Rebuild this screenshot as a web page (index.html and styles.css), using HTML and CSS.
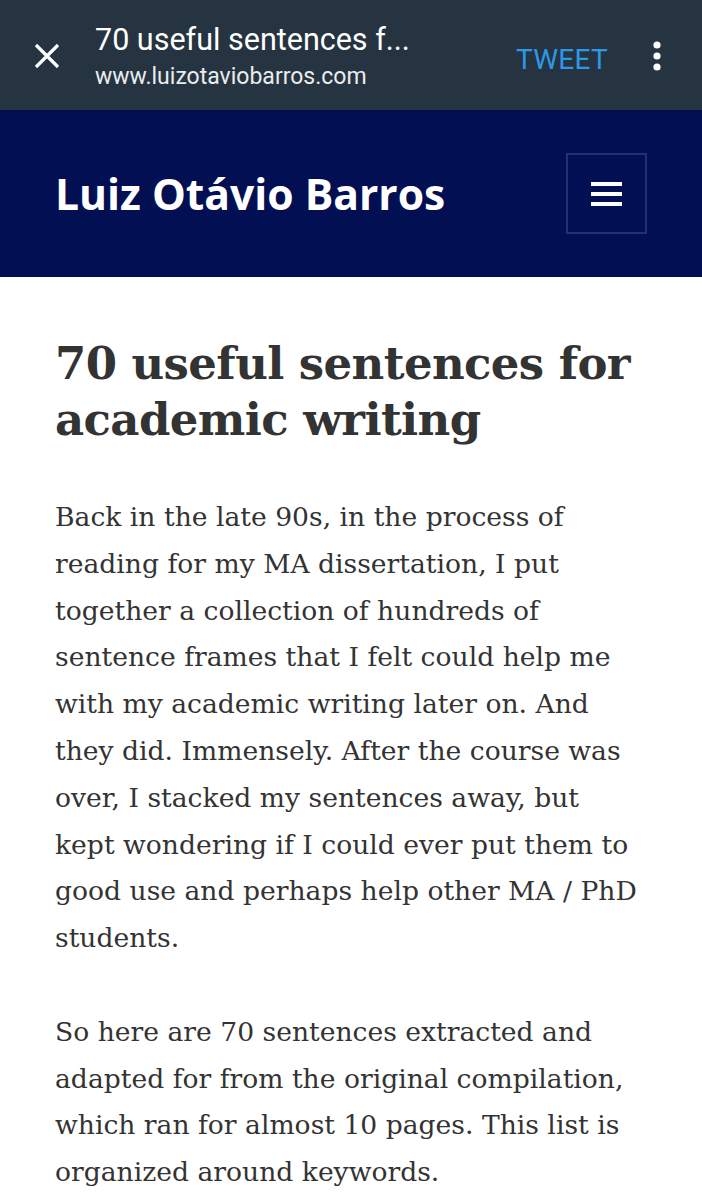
FILE: index.html
```html
<!DOCTYPE html>
<html lang="en">
<head>
<meta charset="utf-8">
<title>70 useful sentences for academic writing</title>
<link rel="stylesheet" href="styles.css">
</head>
<body>
<div class="appbar">
  <svg class="close" viewBox="0 0 28 28" width="28" height="28" aria-hidden="true">
    <path d="M3 3 L25 25 M25 3 L3 25" stroke="#fff" stroke-width="3.2" fill="none"/>
  </svg>
  <div class="appbar-text">
    <div class="appbar-title">70 useful sentences f...</div>
    <div class="appbar-url">www.luizotaviobarros.com</div>
  </div>
  <div class="tweet">TWEET</div>
  <svg class="more" viewBox="0 0 8 30" width="8" height="30" aria-hidden="true">
    <circle cx="4" cy="4" r="3.6" fill="#fff"/>
    <circle cx="4" cy="15" r="3.6" fill="#fff"/>
    <circle cx="4" cy="26" r="3.6" fill="#fff"/>
  </svg>
</div>
<header class="site-header">
  <div class="site-title">Luiz Otávio Barros</div>
  <div class="menu-btn">
    <span></span><span></span><span></span>
  </div>
</header>
<main class="content">
  <h1 class="post-title">70 useful sentences for academic writing</h1>
  <p>Back in the late 90s, in the process of reading for my MA dissertation, I put together a collection of hundreds of sentence frames that I felt could help me with my academic writing later on. And they did. Immensely. After the course was over, I stacked my sentences away, but kept wondering if I could ever put them to good use and perhaps help other MA / PhD students.</p>
  <p>So here are 70 sentences extracted and adapted for from the original compilation, which ran for almost 10 pages. This list is organized around keywords.</p>
</main>
</body>
</html>
```
FILE: styles.css
```css
html, body {
  margin: 0;
  padding: 0;
  background: #fff;
}
body {
  width: 702px;
  overflow: hidden;
}
.appbar {
  height: 110px;
  background: #263340;
  display: flex;
  align-items: center;
  box-sizing: border-box;
  padding: 0 0 0 33px;
}
.close {
  flex: none;
  margin-right: 34px;
  margin-top: 2px;
}
.appbar-text {
  flex: 1;
  align-self: flex-start;
  padding-top: 22px;
  font-family: Roboto, "Liberation Sans", sans-serif;
  color: #fff;
}
.appbar-title {
  font-size: 30.5px;
  line-height: 36px;
}
.appbar-url {
  font-size: 23px;
  line-height: 28px;
  color: #e9ecef;
  margin-top: 5px;
}
.tweet {
  font-family: Roboto, "Liberation Sans", sans-serif;
  font-size: 28px;
  color: #2b9ae6;
  margin-right: 45px;
  margin-top: 8px;
  letter-spacing: 0.3px;
}
.more {
  flex: none;
  margin-right: 41px;
  margin-top: 2px;
}
.site-header {
  height: 167px;
  background: #020f52;
  display: flex;
  align-items: center;
  justify-content: space-between;
  padding: 0 55px;
  box-sizing: border-box;
}
.site-title {
  font-family: "Open Sans", "Noto Sans", sans-serif;
  font-weight: 700;
  font-size: 42.6px;
  color: #fff;
  margin-top: -2px;
}
.menu-btn {
  width: 81px;
  height: 81px;
  box-sizing: border-box;
  border: 2px solid #253070;
  display: flex;
  flex-direction: column;
  align-items: center;
  justify-content: center;
  gap: 6px;
}
.menu-btn span {
  display: block;
  width: 31px;
  height: 4px;
  background: #fff;
}
.content {
  padding: 59px 55px 0;
  font-family: "DejaVu Serif", "Liberation Serif", serif;
  color: #333;
}
.post-title {
  font-size: 45px;
  line-height: 56px;
  font-weight: 700;
  letter-spacing: -0.6px;
  margin: 0 0 46px;
  color: #333;
}
.content p {
  font-size: 26.6px;
  line-height: 46.8px;
  margin: 0 0 46.8px;
}
```
